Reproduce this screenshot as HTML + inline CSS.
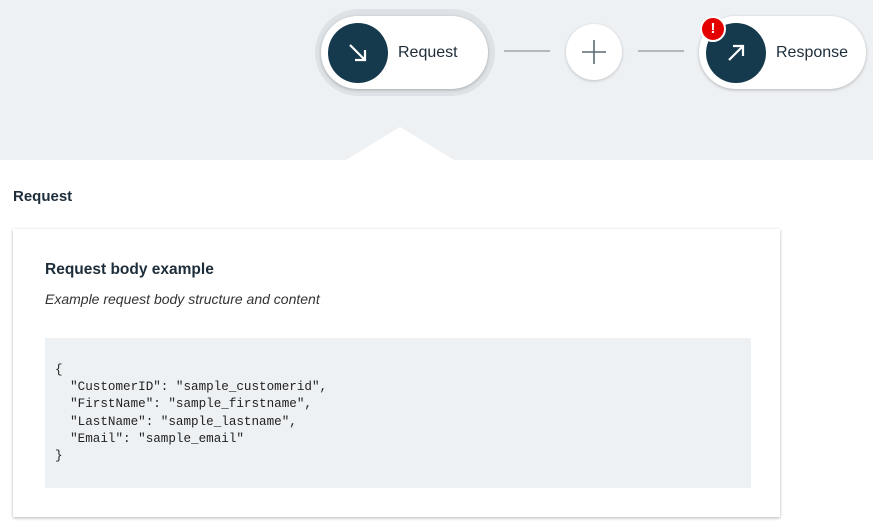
<!DOCTYPE html>
<html><head><style>
body{margin:0;width:873px;height:529px;background:#fff;font-family:"Liberation Sans",sans-serif;position:relative;overflow:hidden;color:#1d2d3a}
.band{position:absolute;left:0;top:0;width:873px;height:160px;background:#eef1f4}
.tri{position:absolute;left:346px;top:127px;width:0;height:0;border-left:54px solid transparent;border-right:54px solid transparent;border-bottom:33px solid #fff}
.halo{position:absolute;left:315px;top:9px;width:180px;height:87px;border-radius:44px;background:#dde2e6}
.pill{position:absolute;top:16px;width:167px;height:73px;border-radius:37px;background:#fff;box-shadow:0 1px 3px rgba(0,0,0,.25)}
.circ{position:absolute;left:7px;top:7px;width:60px;height:60px;border-radius:50%;background:#163a4d}
.pill span{position:absolute;left:77px;top:28px;font-size:16px;color:#1d2d3a}
.line{position:absolute;top:50px;height:2px;width:46px;background:#b5b8ba}
.plus{position:absolute;left:566px;top:24px;width:56px;height:56px;border-radius:50%;background:#fff;box-shadow:0 1px 3px rgba(0,0,0,.2)}
.badge{position:absolute;left:700px;top:16px;width:22px;height:22px;border-radius:50%;background:#e50000;border:2px solid #fff;color:#fff;font-weight:bold;font-size:15px;text-align:center;line-height:22px}
.h{position:absolute;left:13px;top:188px;font-size:15px;font-weight:bold}
.card{position:absolute;left:13px;top:229px;width:767px;height:288px;background:#fff;box-shadow:0 1px 3px rgba(0,0,0,.3)}
.t{position:absolute;left:32px;top:32px;font-size:15.5px;font-weight:bold;color:#1d2d3a}
.s{position:absolute;left:32px;top:62px;font-size:14px;font-style:italic;color:#333}
.code{position:absolute;left:32px;top:109px;width:706px;height:150px;background:#eef1f4}
pre{margin:0;position:absolute;left:10px;top:24px;font-family:"Liberation Mono",monospace;font-size:12.6px;line-height:17.2px;color:#222}
</style></head><body>
<div class="band"></div><div class="tri"></div>
<div class="halo"></div>
<div class="pill" style="left:321px"><div class="circ"><svg width="60" height="60"><path d="M22 22L37 37M37 27V37H27" stroke="#fff" stroke-width="2.2" fill="none"/></svg></div><span>Request</span></div>
<div class="line" style="left:504px"></div>
<div class="plus"><svg width="56" height="56"><path d="M28 16V40M16 28H40" stroke="#5a6b75" stroke-width="1.6"/></svg></div>
<div class="line" style="left:638px"></div>
<div class="pill" style="left:699px"><div class="circ"><svg width="60" height="60"><path d="M23 37L37 23M27 23H37V33" stroke="#fff" stroke-width="2.2" fill="none"/></svg></div><span>Response</span></div>
<div class="badge">!</div>
<div class="h">Request</div>
<div class="card"><div class="t">Request body example</div><div class="s">Example request body structure and content</div>
<div class="code"><pre>{
  "CustomerID": "sample_customerid",
  "FirstName": "sample_firstname",
  "LastName": "sample_lastname",
  "Email": "sample_email"
}</pre></div></div>
</body></html>
